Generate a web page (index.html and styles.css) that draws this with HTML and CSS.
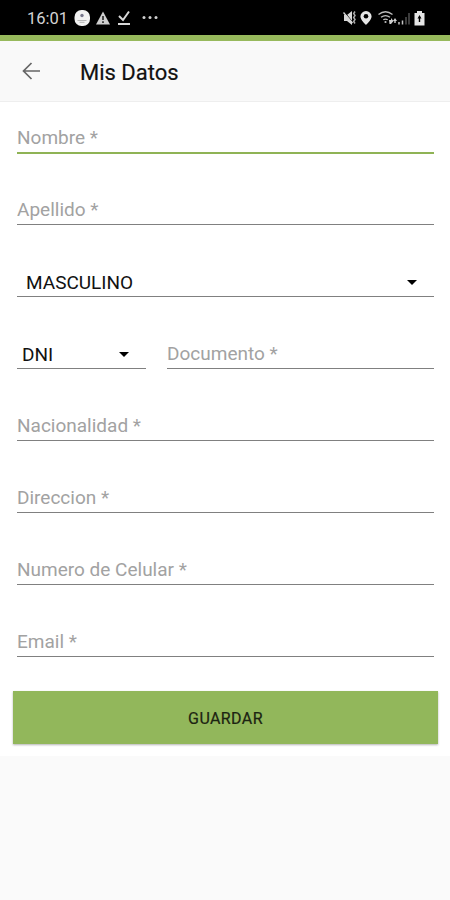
FILE: index.html
```html
<!DOCTYPE html>
<html lang="es">
<head>
    <meta charset="UTF-8">
    <meta name="viewport" content="width=device-width, initial-scale=1.0">
    <title>Mis Datos</title>
    <link rel="stylesheet" href="styles.css">
</head>
<body>
    <div class="status-bar">
        <span class="clock">16:01</span>
        <svg class="status-left" width="80" height="18" viewBox="0 0 80 18">
            <!-- app notification -->
            <rect x="0.5" y="1" width="15.5" height="16" rx="7" fill="#f2f2f2"/>
            <circle cx="8" cy="6.5" r="1.7" fill="#77778c"/>
            <path d="M3.5 11.5h9M5.5 13.3h5" stroke="#b5b5b5" stroke-width="1"/>
            <!-- warning -->
            <path d="M29 2.5L36 15.5H22z" fill="#cfcfcf"/>
            <path d="M29 7v4M29 12.3v1.7" stroke="#222" stroke-width="1.6"/>
            <!-- download done -->
            <path d="M45 7l4 4 6-8.5" fill="none" stroke="#d8d8d8" stroke-width="2"/>
            <path d="M44 15h12" stroke="#d8d8d8" stroke-width="2"/>
        </svg>
        <svg class="dots" width="18" height="18" viewBox="0 0 18 18" fill="#d0d0d0">
            <circle cx="3" cy="8.5" r="1.5"/>
            <circle cx="9" cy="8.5" r="1.5"/>
            <circle cx="15" cy="8.5" r="1.5"/>
        </svg>
        <svg class="status-right" width="84" height="18" viewBox="0 0 84 18">
            <!-- muted, vibrating -->
            <path d="M2 6h3l5-4v14l-5-4H2z" fill="#d8d8d8"/>
            <path d="M2 2.5l9 11" stroke="#000" stroke-width="1"/>
            <path d="M1.5 3.5l9 10.5" stroke="#d8d8d8" stroke-width="1.3"/>
            <path d="M13 2.5l-1.3 2 1.3 2-1.3 2 1.3 2-1.3 2 1.3 2" fill="none" stroke="#aaa" stroke-width="1.5"/>
            <!-- location -->
            <path d="M24 2a5.6 5.6 0 0 0-5.6 5.6C18.4 11 24 16 24 16s5.6-5 5.6-8.4A5.6 5.6 0 0 0 24 2z" fill="#e6e6e6"/>
            <circle cx="24" cy="7.3" r="2.3" fill="#000"/>
            <!-- wifi -->
            <g fill="none" stroke="#bdbdbd" stroke-width="1.3">
                <path d="M36.5 5.5q7-5.5 14 0M39 8.3q4.5-3.5 9 0M41.3 10.8q2.2-1.5 4.4 0"/>
            </g>
            <circle cx="43.5" cy="13" r="1.1" fill="#bdbdbd"/>
            <path d="M47 11h2V9l2.5 3-2.5 3h-1.5zM51 12l2-3 2 3h-1.3v2h-1.4v-2z" fill="#d0d0d0"/>
            <!-- signal -->
            <path d="M57 13v2.5M60.5 11.5v4" stroke="#c4c4c4" stroke-width="1.5"/>
            <path d="M64 8v7.5M67 4v11.5" stroke="#5c5c5c" stroke-width="1.3"/>
            <!-- battery -->
            <path d="M75 2h5v2h2.500v12.500h-10V4H75z" fill="#e6e6e6"/>
            <path d="M77.500 6l2 3.500h-1.300V13h-1.400V9.500h-1.300z" fill="#000"/>
        </svg>
    </div>
    <header class="app-bar">
        <svg class="back" width="20" height="20" viewBox="0 0 20 20" fill="none" stroke="#666" stroke-width="1.7">
            <path d="M19 10H2.5M10.5 2l-8 8 8 8"/>
        </svg>
        <h1>Mis Datos</h1>
    </header>
    <form class="datos-form">
        <input class="field active" type="text" name="nombre" placeholder="Nombre *">
        <input class="field" type="text" name="apellido" placeholder="Apellido *">
        <div class="field spinner spinner-sexo">
            <span>MASCULINO</span>
            <svg width="10" height="5" viewBox="0 0 10 5"><path d="M0 0h10L5 5z"/></svg>
        </div>
        <div class="field-row">
            <div class="field spinner spinner-tipo">
                <span>DNI</span>
                <svg width="10" height="5" viewBox="0 0 10 5"><path d="M0 0h10L5 5z"/></svg>
            </div>
            <input class="field" type="text" name="documento" placeholder="Documento *">
        </div>
        <input class="field" type="text" name="nacionalidad" placeholder="Nacionalidad *">
        <input class="field" type="text" name="direccion" placeholder="Direccion *">
        <input class="field" type="tel" name="celular" placeholder="Numero de Celular *">
        <input class="field" type="email" name="email" placeholder="Email *">
        <button class="guardar" type="submit">GUARDAR</button>
    </form>
</body>
</html>
```
FILE: styles.css
```css
* {
    box-sizing: border-box;
}

body {
    margin: 0;
    background-color: #fafafa;
    font-family: Roboto, sans-serif;
    color: #111;
}

.status-bar {
    display: flex;
    align-items: center;
    height: 41px;
    padding: 0 24px 0 27px;
    background-color: #000;
    border-bottom: 6px solid #97b95c;
}

.clock {
    width: 47px;
    padding-top: 1px;
    font-size: 16.5px;
    color: #d4d4d4;
}

.status-left {
    width: 80px;
    margin-right: -13px;
}

.status-right {
    margin-left: auto;
}

.app-bar {
    display: flex;
    align-items: center;
    height: 61px;
    padding: 0 21px;
    background-color: #f9f9f9;
    border-bottom: 1px solid #eee;
}

.app-bar h1 {
    margin: 2px 0 0 39px;
    font-size: 22px;
    font-weight: 400;
    -webkit-text-stroke: 0.2px #111;
}

.datos-form {
    display: flex;
    flex-direction: column;
    gap: 32px;
    height: 654px;
    padding: 11px 16px 0 17px;
    background-color: #fff;
}

.field {
    flex: none;
    width: 100%;
    height: 40px;
    padding: 9px 0 0;
    border: none;
    border-bottom: 1px solid #808080;
    border-radius: 0;
    background: none;
    font-family: inherit;
    font-size: 19px;
    color: #111;
    outline: none;
}

.field::placeholder {
    color: #a2a2a2;
    opacity: 1;
}

.field.active {
    height: 41px;
    margin-bottom: -1px;
    border-bottom: 2px solid #8fb355;
}

.field-row {
    display: flex;
    gap: 21px;
}

.field-row input {
    flex: 1;
    width: auto;
    min-width: 0;
}

.spinner {
    display: flex;
    align-items: center;
    justify-content: space-between;
}

.spinner-sexo {
    padding: 12px 17px 0 9px;
}

.spinner-tipo {
    width: 129px;
    padding: 12px 17px 0 5px;
}

.guardar {
    flex: none;
    height: 53px;
    margin: 2px -4px 0;
    padding-top: 2px;
    border: none;
    background-color: #92b75b;
    box-shadow: 0 1px 2px rgba(0, 0, 0, 0.3);
    font-family: inherit;
    font-size: 16px;
    font-weight: 400;
    letter-spacing: 0.4px;
    color: #1c2412;
    -webkit-text-stroke: 0.2px #1c2412;
}
```
